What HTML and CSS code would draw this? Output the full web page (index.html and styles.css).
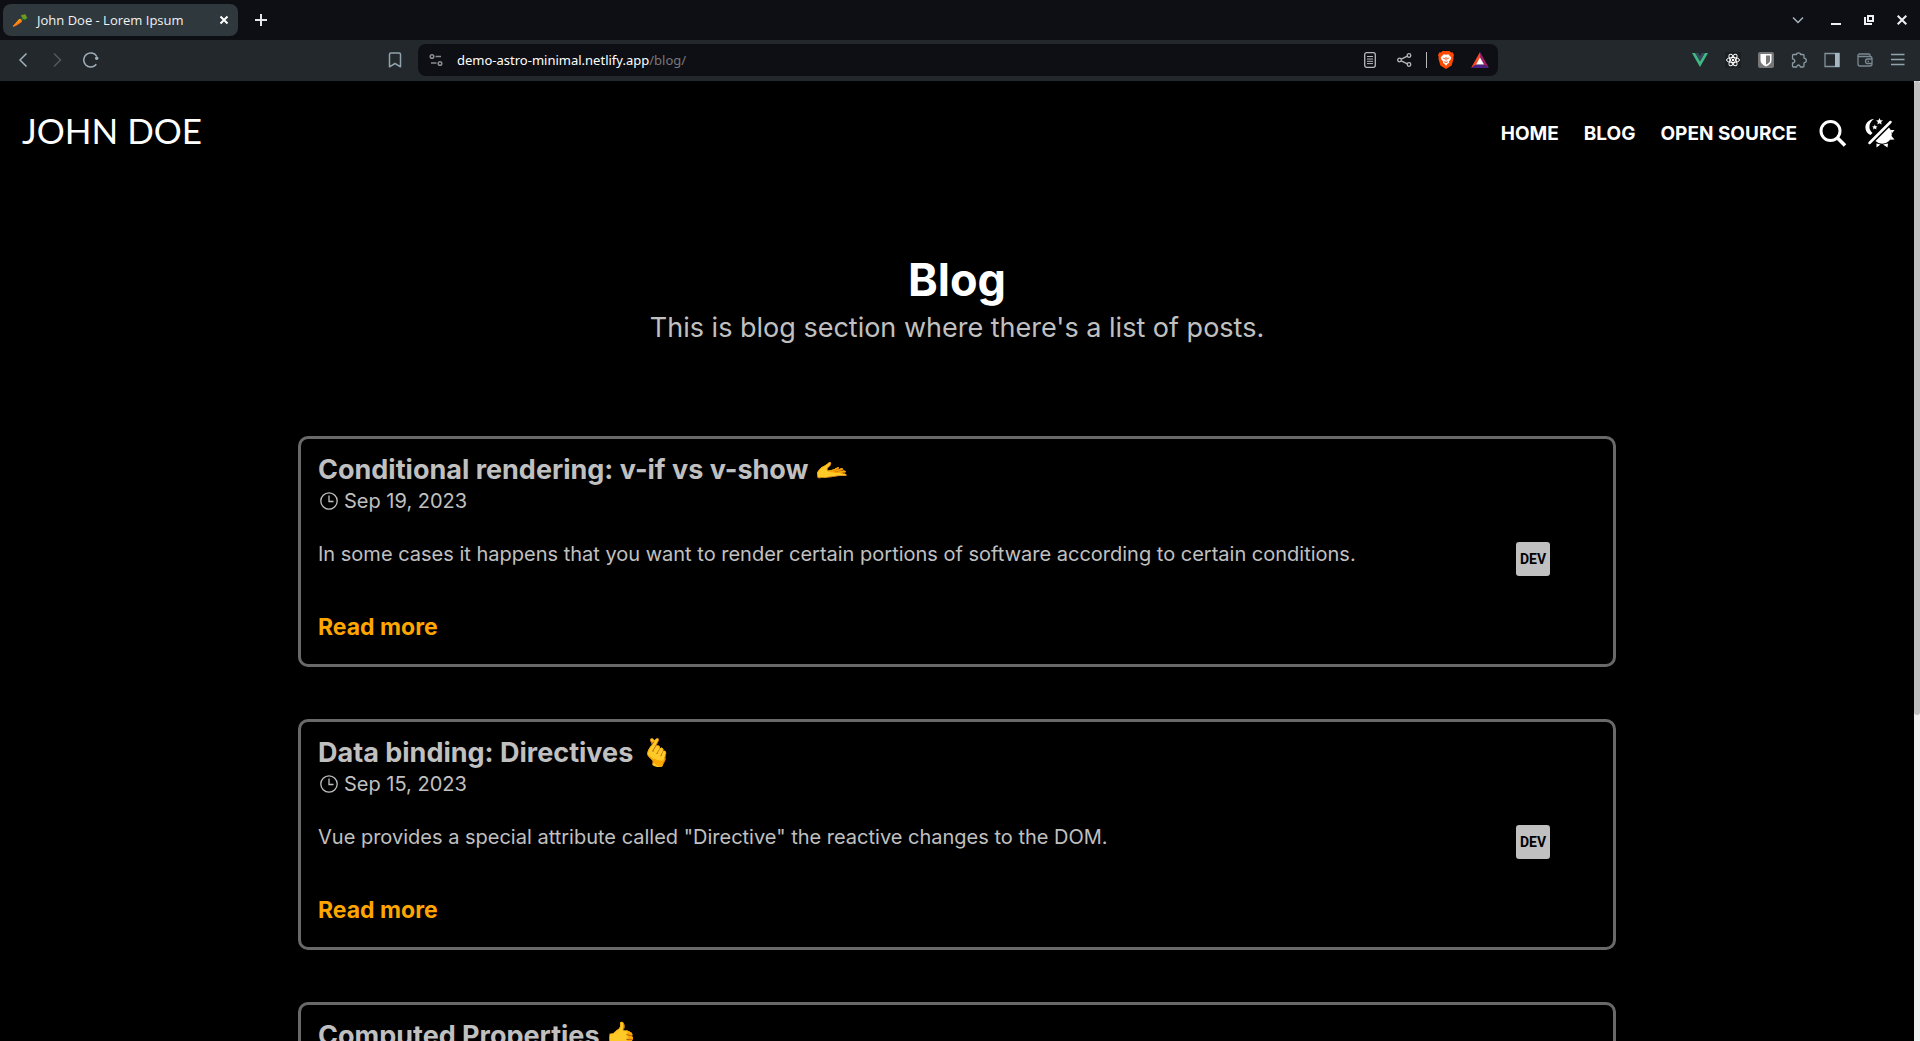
FILE: index.html
```html
<!DOCTYPE html>
<html lang="en">

<head>
    <meta charset="utf-8">
    <title>John Doe - Lorem Ipsum</title>
    <link rel="stylesheet" href="styles.css">
</head>

<body>
    <!-- Browser window -->
    <div class="tabs">
        <div class="tab">
            <span class="favicon">🥕</span>
            <span class="tab-title">John Doe - Lorem Ipsum</span>
            <button class="icon-button" aria-label="Close tab">
                <svg width="10" height="10" viewBox="0 0 10 10" stroke="#fff" stroke-width="2"><path d="M1.500 1.500l7 7M8.500 1.500l-7 7" /></svg>
            </button>
        </div>
        <button class="icon-button new-tab" aria-label="New tab">
            <svg width="12" height="12" viewBox="0 0 12 12" stroke="#e6e6ea" stroke-width="2"><path d="M6 0v12M0 6h12" /></svg>
        </button>
        <div class="window-buttons">
            <button class="icon-button" aria-label="Search tabs">
                <svg width="12" height="8" viewBox="0 0 12 8" fill="none" stroke="#a9b5bd" stroke-width="1.500"><path d="M1 1.500l5 5 5-5" /></svg>
            </button>
            <button class="icon-button" aria-label="Minimize">
                <svg width="10" height="10" viewBox="0 0 10 10" fill="#f0f0f4"><path d="M0 8h10v2H0z" /></svg>
            </button>
            <button class="icon-button" aria-label="Restore">
                <svg width="10" height="10" viewBox="0 0 10 10" fill="none" stroke="#f0f0f4" stroke-width="2"><path d="M4 1h5v5H4z M1 2v7h7" /></svg>
            </button>
            <button class="icon-button" aria-label="Close">
                <svg width="10" height="10" viewBox="0 0 10 10" stroke="#f0f0f4" stroke-width="2"><path d="M.7.7l8.600 8.600M9.300.7L.7 9.300" /></svg>
            </button>
        </div>
    </div>
    <div class="toolbar">
        <div class="toolbar-nav">
            <button class="icon-button" aria-label="Back">
                <svg width="16" height="16" viewBox="0 0 16 16" fill="none" stroke="#a0b0ba" stroke-width="1.500"><path d="M11.500 1.500L5 8l6.500 6.500" /></svg>
            </button>
            <button class="icon-button" aria-label="Forward">
                <svg width="16" height="16" viewBox="0 0 16 16" fill="none" stroke="#505a60" stroke-width="1.500"><path d="M5 1.500L11.500 8 5 14.500" /></svg>
            </button>
            <button class="icon-button" aria-label="Reload">
                <svg width="16" height="16" viewBox="0 0 16 16" fill="none" stroke="#a0b0ba" stroke-width="1.500"><path d="M13.300 12.200A7 7 0 1 1 13.800 4.500" /><circle cx="13.700" cy="6.300" r="1.700" fill="#a0b0ba" stroke="none" /></svg>
            </button>
        </div>
        <button class="icon-button bookmark" aria-label="Bookmark">
            <svg width="14" height="16" viewBox="0 0 14 16" fill="none" stroke="#92a2ac" stroke-width="1.500"><path d="M1.500 2.500q0-1.500 1.500-1.500h8q1.500 0 1.500 1.500v12.300L7 11.500l-5.500 3.300z" stroke-linejoin="round" /></svg>
        </button>
        <div class="address">
            <svg width="14" height="14" viewBox="0 0 14 14" fill="none" stroke="#8b8c91" stroke-width="1.500"><circle cx="3" cy="3.500" r="1.800" /><path d="M6.500 3.500H12M2 10h5.500" /><circle cx="11" cy="10.500" r="1.800" /></svg>
            <div class="url">demo-astro-minimal.netlify.app<span>/blog/</span></div>
            <button class="icon-button reader" aria-label="Reader mode">
                <svg width="12" height="16" viewBox="0 0 12 16" fill="none" stroke="#b8b8bb" stroke-width="1.300"><rect x=".7" y=".7" width="10.600" height="14.600" rx="2" /><path d="M3 4.500h6M3 7h6M3 9.300h6M3 11.600h6" stroke-width="1" /></svg>
            </button>
            <button class="icon-button" aria-label="Share">
                <svg width="15" height="14" viewBox="0 0 15 14" fill="none" stroke="#b8b8bb" stroke-width="1.300"><circle cx="2.500" cy="7" r="1.800" /><circle cx="12" cy="2.500" r="1.800" /><circle cx="12" cy="11.500" r="1.800" /><path d="M4.200 6.200l6.200-3M4.200 7.800l6.200 3" /></svg>
            </button>
            <div class="separator"></div>
            <button class="icon-button" aria-label="Shields">
                <svg width="16" height="18" viewBox="0 0 16 18"><path d="M4.500 0h7l1.500 1.500 1.500-.2L16 4l-.7 2 .3 1.500-2 7L8 18l-5.600-3.500-2-7L.7 6 0 4l1.500-2.700 1.500.2z" fill="#ff4a00" /><path d="M5.700 3.200L8 3.700l2.300-.5 3 3.300-.7 2-1.700 1.900.2 1.600-1.200.6L8 14.800l-1.900-2.200-1.200-.6.2-1.600-1.700-1.900-.7-2z" fill="#fff" /><path d="M4.500 6.500l2.500.7-.7 1.200zM11.500 6.500L9 7.200l.7 1.200zM7.500 6h1v3.500h-1zM6.300 10.200l1.700.8 1.700-.8v1L8 12l-1.700-.8z" fill="#ff4a00" /></svg>
            </button>
            <button class="icon-button" aria-label="Rewards">
                <svg width="18" height="16" viewBox="0 0 18 16"><path d="M9 0L0 16l5.500-3.500L9 6z" fill="#ff4724" /><path d="M9 0v6l3.500 6.500L18 16z" fill="#9e1f63" /><path d="M0 16h18l-5.500-3.500h-7z" fill="#4b2087" /><path d="M9 5.500l-4 7h8z" fill="#fff" /></svg>
            </button>
        </div>
        <div class="extensions">
            <button class="icon-button" aria-label="Vue devtools">
                <svg width="16" height="16" viewBox="0 0 16 16"><path d="M0 1h3.200L8 9.300 12.800 1H16L8 15z" fill="#41b883" /><path d="M3.200 1h3L8 4.200 9.800 1h3L8 9.300z" fill="#35495e" /></svg>
            </button>
            <button class="icon-button" aria-label="React devtools">
                <svg width="16" height="16" viewBox="0 0 16 16" fill="none" stroke="#fff"><path d="M0 0h16v16H0z" fill="#1b1f22" stroke="none" /><ellipse cx="8" cy="8" rx="6.500" ry="2.500" /><ellipse cx="8" cy="8" rx="6.500" ry="2.500" transform="rotate(60 8 8)" /><ellipse cx="8" cy="8" rx="6.500" ry="2.500" transform="rotate(120 8 8)" /><circle cx="8" cy="8" r="1.200" fill="#fff" stroke="none" /></svg>
            </button>
            <button class="icon-button" aria-label="Bitwarden">
                <svg width="16" height="16" viewBox="0 0 16 16"><rect width="16" height="16" rx="2" fill="#777" /><path d="M2.500 2h11v6.500Q13.500 12 8 14.500 2.500 12 2.500 8.500z" fill="#fff" /><path d="M8 3.500h4V8.500Q12 11 8 12.800z" fill="#777" /></svg>
            </button>
            <button class="icon-button" aria-label="Extensions">
                <svg width="16" height="16" viewBox="0 0 16 16" fill="none" stroke="#8b9aa3" stroke-width="1.300" stroke-linejoin="round"><path d="M1.500 3.500q0-1 1-1H5.500Q5.500.8 7.500.8T9.500 2.500H12q1 0 1 1V6.200Q15.300 6.500 15.300 8.500T13 10.800V14q0 1-1 1H9.300Q9 13 7.500 13T5.700 15H2.500q-1 0-1-1V11Q3.800 10.800 3.800 9T1.500 6.800z" /></svg>
            </button>
            <button class="icon-button" aria-label="Sidebar">
                <svg width="16" height="16" viewBox="0 0 16 16"><path d="M1 1.500h14v13H1z" fill="none" stroke="#83939c" stroke-width="1.300" /><path d="M11 1h4.500v14H11z" fill="#a6b7c1" /></svg>
            </button>
            <button class="icon-button" aria-label="Wallet">
                <svg width="16" height="16" viewBox="0 0 16 16" fill="none" stroke="#7b8991" stroke-width="1.300"><path d="M13 4.500V3q0-1-1-1H2.500Q1 2 1 3.500V12q0 2 2 2h10q2 0 2-2V6.500q0-2-2-2H2.500Q1 4.500 1 3" /><path d="M15 7h-4.500q-2 0-2 2.300t2 2.200H15M10.500 9.300H12" /></svg>
            </button>
            <button class="icon-button" aria-label="Menu">
                <svg width="16" height="16" viewBox="0 0 16 16" stroke="#93a3ac" stroke-width="1.300"><path d="M1 2.500h13.500M1 7.500h13.500M1 12.500h13.500" /></svg>
            </button>
        </div>
    </div>

    <!-- Blog page -->
    <div class="page">
        <div class="content">
            <header>
                <a class="logo" href="#">JOHN DOE</a>
                <nav>
                    <a href="#">HOME</a>
                    <a href="#">BLOG</a>
                    <a href="#">OPEN SOURCE</a>
                    <button class="icon-button search" aria-label="Search">
                        <svg width="28" height="28" viewBox="0 0 28 28" fill="none" stroke="#fff" stroke-width="3"><circle cx="11.500" cy="12" r="9.500" /><path d="M18 18.500l8 8" stroke-width="3.500" /></svg>
                    </button>
                    <button class="icon-button" aria-label="Toggle theme">
                        <svg width="30" height="30" viewBox="0 0 30 30" fill="#fff">
                            <path d="M9 1C-1.500 2-2 14 5.500 17L7.500 15C2.500 11 4 4 9 1z" />
                            <path d="M14.500 0l1 2.300 2.500.2-1.900 1.600.6 2.500-2.200-1.300-2.200 1.300.6-2.500L11 2.500l2.500-.2zM9.800 6.500l.8 1.700 1.900.2-1.400 1.300.4 1.900-1.700-1-1.700 1 .4-1.900-1.400-1.300 1.900-.2z" />
                            <path d="M25.500 4L4.500 25" fill="none" stroke="#fff" stroke-width="2.500" stroke-linecap="round" />
                            <path d="M24 9.500A9.300 9.300 0 0 1 10.500 23z" />
                            <path d="M25.500 12h4l-2.500 3.300zM26 17.500l3.500 4-4.500.3zM11.500 25.500l4 1-4 3zM18 26.500l5-1-.5 4z" />
                        </svg>
                    </button>
                </nav>
            </header>
            <main>
                <div class="intro">
                    <h1>Blog</h1>
                    <p>This is blog section where there's a list of posts.</p>
                </div>
                <article class="card">
                    <h2>Conditional rendering: v-if vs v-show 🫴</h2>
                    <div class="date">
                        <svg width="18" height="18" viewBox="0 0 18 18" fill="none" stroke="silver" stroke-width="1.300"><circle cx="9" cy="9" r="8.200" /><path d="M9 3.500V9.500h4.500" /></svg>
                        <time datetime="2023-09-19">Sep 19, 2023</time>
                    </div>
                    <div class="summary">
                        <p>In some cases it happens that you want to render certain portions of software according to certain conditions.</p>
                        <a class="dev" href="#">DEV</a>
                    </div>
                    <a class="more" href="#">Read more</a>
                </article>
                <article class="card">
                    <h2>Data binding: Directives 🫰</h2>
                    <div class="date">
                        <svg width="18" height="18" viewBox="0 0 18 18" fill="none" stroke="silver" stroke-width="1.300"><circle cx="9" cy="9" r="8.200" /><path d="M9 3.500V9.500h4.500" /></svg>
                        <time datetime="2023-09-15">Sep 15, 2023</time>
                    </div>
                    <div class="summary">
                        <p>Vue provides a special attribute called "Directive" the reactive changes to the DOM.</p>
                        <a class="dev" href="#">DEV</a>
                    </div>
                    <a class="more" href="#">Read more</a>
                </article>
                <article class="card">
                    <h2>Computed Properties 🤙</h2>
                </article>
            </main>
        </div>
        <div class="scrollbar">
            <div class="thumb"></div>
        </div>
    </div>
</body>

</html>
```
FILE: styles.css
```css
* {
    box-sizing: border-box;
}

body {
    margin: 0;
    height: 100vh;
    display: flex;
    flex-direction: column;
    overflow: hidden;
    background: #000;
    color: silver;
    font-family: Inter, "Noto Sans", sans-serif;
    font-size: 20px;
}

h1, h2, p {
    margin: 0;
}

a {
    color: inherit;
    text-decoration: none;
}

svg {
    display: block;
    flex: none;
}

.icon-button {
    flex: none;
    padding: 0;
    border: 0;
    background: none;
    cursor: pointer;
}

/* Browser window */
.tabs {
    flex: none;
    display: flex;
    align-items: center;
    height: 40px;
    padding: 0 13px 0 3px;
    background: #0e0f14;
}

.tab {
    display: flex;
    align-items: center;
    width: 235px;
    height: 32px;
    padding: 0 9px;
    border-radius: 8px;
    background: #2f383c;
    color: #f0f2f4;
    font-family: "Open Sans", sans-serif;
    font-size: 13px;
}

.favicon {
    width: 25px;
}

.tab-title {
    flex: 1;
}

.new-tab {
    margin-left: 17px;
}

.window-buttons {
    display: flex;
    align-items: center;
    gap: 23px;
    margin-left: auto;
}

.window-buttons button:first-child {
    margin-right: 4px;
}

.toolbar {
    flex: none;
    display: flex;
    align-items: center;
    height: 41px;
    padding: 0 14px 1px 15px;
    background: #22282c;
}

.toolbar-nav {
    display: flex;
    gap: 18px;
}

.bookmark {
    margin-left: auto;
}

.address {
    display: flex;
    align-items: center;
    width: 1080px;
    height: 32px;
    margin: 0 194px 0 16px;
    padding: 0 9px 0 11px;
    border-radius: 8px;
    background: #0e0f14;
    color: #fff;
    font-family: "Noto Sans", sans-serif;
    font-size: 13px;
}

.url {
    flex: 1;
    margin-left: 14px;
}

.url span {
    color: #77787c;
}

.reader {
    margin-right: 21px;
}

.separator {
    width: 1px;
    height: 16px;
    margin: 0 11px 0 14px;
    background: #b8b8bb;
}

.address button:last-child {
    margin-left: 17px;
}

.extensions {
    display: flex;
    gap: 17px;
}

/* Blog page */
.page {
    flex: 1;
    display: flex;
    min-height: 0;
}

.content {
    flex: 1;
    overflow: hidden;
}

.scrollbar {
    width: 6px;
    background: #f1f1f1;
}

.thumb {
    height: 66%;
    border-radius: 3px;
    background: #c1c1c1;
}

header {
    display: flex;
    align-items: center;
    justify-content: space-between;
    height: 104px;
    padding: 0 19px 0 22px;
    color: #fff;
}

.logo {
    padding-bottom: 6px;
    font-family: Lato, sans-serif;
    font-size: 35px;
}

nav {
    display: flex;
    align-items: center;
    font-size: 19px;
    font-weight: 700;
}

nav a {
    margin-right: 25px;
}

.search {
    margin: 0 18px 0 -3px;
}

.intro {
    margin: 65px 0 90px;
    text-align: center;
}

.intro h1 {
    color: #fff;
    font-size: 45px;
    line-height: 60px;
}

.intro p {
    font-size: 27px;
    line-height: 36px;
}

.card {
    width: 1318px;
    max-width: 90%;
    min-height: 231px;
    margin: 0 auto 52px;
    padding: 13px 17px;
    border: 3px solid #696969;
    border-radius: 10px;
}

.card h2 {
    font-size: 27px;
    line-height: 36px;
}

.date {
    display: flex;
    align-items: center;
    gap: 6px;
    padding-left: 2px;
    line-height: 26px;
}

.summary {
    display: flex;
    align-items: flex-start;
    justify-content: space-between;
    margin: 25px 46px 36px 0;
    line-height: 30px;
}

.dev {
    display: flex;
    align-items: center;
    justify-content: center;
    width: 34px;
    height: 34px;
    margin-top: 3px;
    border-radius: 3px;
    background: silver;
    color: #000;
    font-family: Roboto, sans-serif;
    font-size: 14px;
    font-weight: 700;
}

.more {
    color: orange;
    font-size: 23px;
    font-weight: 700;
    line-height: 30px;
}
```
